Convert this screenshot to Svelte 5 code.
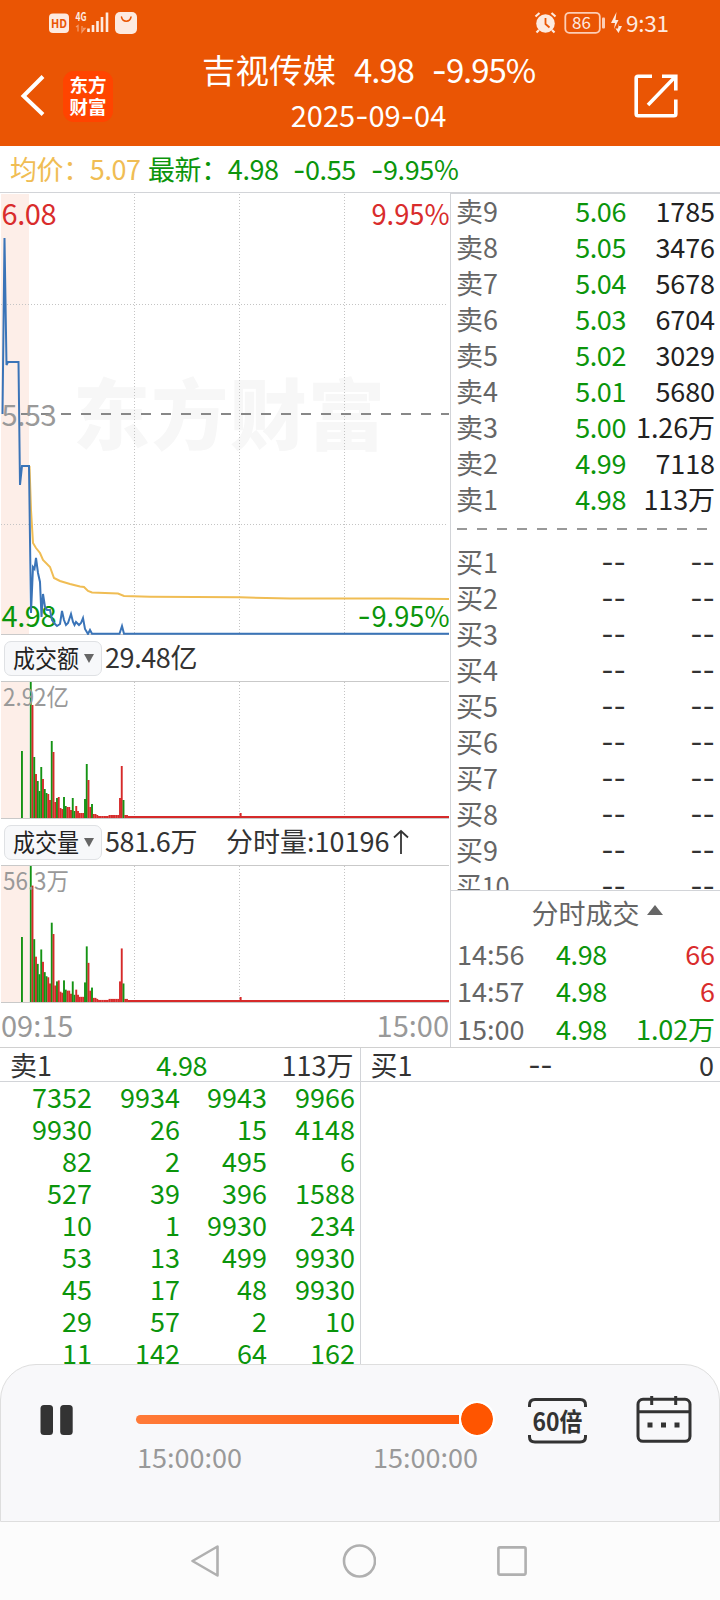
<script lang="ts">
    type Bar = { x: number; h: number; up: boolean };

    const sells = [
        ['卖9', '5.06', '1785'],
        ['卖8', '5.05', '3476'],
        ['卖7', '5.04', '5678'],
        ['卖6', '5.03', '6704'],
        ['卖5', '5.02', '3029'],
        ['卖4', '5.01', '5680'],
        ['卖3', '5.00', '1.26万'],
        ['卖2', '4.99', '7118'],
        ['卖1', '4.98', '113万'],
    ];
    const buys = [1, 2, 3, 4, 5, 6, 7, 8, 9, 10];

    const trades = [
        { time: '14:56', price: '4.98', vol: '66', up: true },
        { time: '14:57', price: '4.98', vol: '6', up: true },
        { time: '15:00', price: '4.98', vol: '1.02万', up: false },
    ];

    const queue = [
        [7352, 9934, 9943, 9966],
        [9930, 26, 15, 4148],
        [82, 2, 495, 6],
        [527, 39, 396, 1588],
        [10, 1, 9930, 234],
        [53, 13, 499, 9930],
        [45, 17, 48, 9930],
        [29, 57, 2, 10],
        [11, 142, 64, 162],
    ];

    const gridX = [134.5, 239.5, 344.5];

    const priceLine =
        '2.5,414 4.5,238 6.5,365 8,362 18.5,362 20,485 22,466 29,466 31,613 33,567 34.5,569 36,558 38,573 40,582 41.5,617 43,594 45,607 47,610 50,610 52,620 55,624 57,626 60,624 62,611 64,620 66,625 68,623 71,614 73,622 74.5,625 76,622 79,625 81,623 83,618 85,629 88,634 90,630 92,633.7 119.5,633.7 122,626 124,633.7 449,633.7';
    const avgLine =
        '29.5,466 31,510 33,543 36,548 40,553 43,560 50,567 54,578 60,581 70,584 80,586.5 84,587 88,591 92,592.5 118,593.5 124,596 150,596.7 240,597.3 290,598.5 393,598.5 449,599';

    // minute bars after the open, bar height in px; u = up (red), d = down (green)
    const minutes =
        'd136 u113 d61 u44 d37 d27 d51 u39 d29 d25 u24 u18 d77 u66 u16 d20 u21 u10 u9 d21 d12 u11 u11 u8 d20 d7 u12 u7 u5 u5 u5 d19 d54 u38 u11 d14 u4 u4 u3 u2 u2 u2 u2 u2 u2 u3 u3 u3 u3 u3 u3 u20 u52 d18 u3 u3';

    function makeBars(first: number, auction: number, scale: number): Bar[] {
        const bars = minutes.split(' ').map((m, i) => ({
            x: 29.8 + i * 1.75,
            h: i === 0 ? first : Number(m.slice(1)) * scale,
            up: m[0] === 'u',
        }));
        return [{ x: 21, h: auction, up: false }, ...bars];
    }

    const amountBars = makeBars(136, 67, 1);
    const volumeBars = makeBars(136, 65, 1.03);
</script>

{#snippet signed(value: string)}<span class="minus">-</span>{value}{/snippet}

{#snippet histogram(bars: Bar[], label: string)}
    <svg class="histogram" width="450" height="138" viewBox="0 0 450 138">
        <rect x="1" y="1" width="28" height="136" fill="#fdeee8" />
        {#each gridX as x}
            <line class="grid" x1={x} x2={x} y1="1" y2="136" />
        {/each}
        <path d="M1 .5H449M1 137.5H449" stroke="#c9c9c9" />
        {#each bars as bar}
            <rect x={bar.x} y={137 - bar.h} width="1.9" height={bar.h} fill={bar.up ? '#d62a2a' : '#149314'} />
        {/each}
        <rect x="128" y="135" width="321" height="2" fill="#d62a2a" />
        <rect x="239.6" y="132" width="2" height="4" fill="#d62a2a" />
        <text x="3" y="25" font-size="24" fill="#999" textLength="66" lengthAdjust="spacingAndGlyphs">{label}</text>
    </svg>
{/snippet}

<div class="screen">
    <header>
        <div class="status">
            <svg width="90" height="24" viewBox="48 11 90 24">
                <rect x="49" y="13.500" width="20" height="19.500" rx="4" fill="#fdeae0" />
                <text x="51" y="28" font-size="12" font-weight="700" fill="#ea5504" textLength="16" lengthAdjust="spacingAndGlyphs">HD</text>
                <text x="75.500" y="21" font-size="12" font-weight="700" fill="#fdeae0" textLength="11" lengthAdjust="spacingAndGlyphs">4G</text>
                <path d="M76 27l2-1.500v6M82 26v6l3-3.500h-2" fill="none" stroke="#f39a6b" stroke-width="1.300" />
                <path d="M88.500 28.500V32M93 25V32M97.500 21V32M102 17V32M107 12.500V32" stroke="#fdeae0" stroke-width="2.600" />
                <rect x="115" y="12" width="22" height="22" rx="5" fill="#fdeae0" />
                <path d="M121.500 17c1 5.500 8.500 5.500 9.500 0" fill="none" stroke="#ea5504" stroke-width="1.500" stroke-linecap="round" />
            </svg>
            <svg width="136" height="24" viewBox="534 11 136 24">
                <circle cx="545.500" cy="23.500" r="9.300" fill="#fdeae0" />
                <path d="M535.500 16.500l4-3.500M551.500 13l4 3.500M539 30l-2.500 2.500M552 30l2.500 2.500" stroke="#fdeae0" stroke-width="2.200" />
                <path d="M545.500 18v6l4 3.500" fill="none" stroke="#ea5504" stroke-width="1.800" />
                <rect x="565.300" y="12.800" width="34.500" height="20" rx="4" fill="none" stroke="#fdcdb5" stroke-width="1.800" />
                <rect x="602" y="17.500" width="3" height="11" rx="1" fill="#fdcdb5" />
                <text x="572" y="28.800" font-size="17" fill="#fdeae0">86</text>
                <path d="M616.500 12l-5.500 11h4l-1 6 4.500-9h-3zM619 23.500l-1 5h-2.500l3 4.500 3.500-7h-3z" fill="#fdeae0" />
                <text x="626" y="31.500" font-size="22.500" fill="#fdeae0" textLength="43">9:31</text>
            </svg>
        </div>
        <div class="titlebar">
            <svg class="back" width="26" height="42" viewBox="0 0 26 42">
                <path d="M23 1.500L3.500 21L23 39.500" fill="none" stroke="#fff" stroke-width="4" />
            </svg>
            <div class="logo"><span>东方</span><span>财富</span></div>
            <div class="title">
                <h1><span>吉视传媒</span><span class="figure">4.98</span><span class="figure">{@render signed('9.95%')}</span></h1>
                <p>2025{@render signed('09')}{@render signed('04')}</p>
            </div>
            <svg class="share" width="44" height="44" viewBox="0 0 44 44" fill="none" stroke="#fff" stroke-width="3.600">
                <path d="M18 2.200H4Q2.200 2.200 2.200 4V40Q2.200 41.800 4 41.800H40Q41.800 41.800 41.800 40V25.500" />
                <path d="M28 2.200H41.800V16.500M41 3L14 31" />
            </svg>
        </div>
    </header>

    <div class="quote">
        <span class="avg">均价：5.07</span>
        <span class="latest">最新：4.98</span>
        <span class="change">{@render signed('0.55')}</span>
        <span>{@render signed('9.95%')}</span>
    </div>

    <main>
        <section class="charts">
            <svg width="450" height="443" viewBox="0 192 450 443">
                <path d="M0 192.500H450" stroke="#d2d4d8" />
                <rect x="1" y="194" width="28" height="440" fill="#fdeee8" />
                <text x="73" y="444" font-size="77" font-weight="900" fill="#f7f7f7" textLength="312">东方财富</text>
                {#each gridX as x}
                    <line class="grid" x1={x} x2={x} y1="194" y2="633" />
                {/each}
                <path class="grid" d="M1 304.500H448M1 524.500H448" />
                <path d="M1 634.500H449" stroke="#c9c9c9" />
                <path d="M61 414H449" stroke="#888" stroke-width="2" stroke-dasharray="10 10" />
                <path d="M21 414H31M41 414H51" stroke="#888" stroke-width="2" />
                <text x="1.500" y="425.500" font-size="29" fill="#999" textLength="55">5.53</text>
                <polyline points={avgLine} fill="none" stroke="#f0bd54" stroke-width="2" />
                <text x="1.500" y="626.500" font-size="29" fill="#0b950b" textLength="55">4.98</text>
                <polyline points={priceLine} fill="none" stroke="#3a74b8" stroke-width="2" />
                <text x="1.500" y="225" font-size="29" fill="#d92c2c" textLength="55">6.08</text>
                <text x="449.500" y="225" font-size="29" fill="#d92c2c" text-anchor="end" textLength="78" lengthAdjust="spacingAndGlyphs">9.95%</text>
                <text x="449.500" y="627" font-size="29" fill="#0b950b" text-anchor="end" textLength="78" lengthAdjust="spacingAndGlyphs">9.95%</text>
                <text class="minus" x="357.500" y="627" font-size="29" fill="#0b950b">-</text>
            </svg>

            <div class="toolbar">
                <button><span>成交额</span><i></i></button>
                <span class="total">29.48亿</span>
            </div>
            {@render histogram(amountBars, '2.92亿')}

            <div class="toolbar">
                <button><span>成交量</span><i></i></button>
                <span class="total">581.6万</span>
                <span>分时量:10196</span>
                <svg width="16" height="26" viewBox="0 0 16 26" fill="none" stroke="#333" stroke-width="1.800">
                    <path d="M8 25V2M1 8.500L8 2L15 8.500" />
                </svg>
            </div>
            {@render histogram(volumeBars, '56.3万')}

            <div class="axis"><span>09:15</span><span>15:00</span></div>
        </section>

        <section class="book">
            <div class="levels">
                {#each sells as [label, price, vol]}
                    <div class="level">
                        <span class="label">{label}</span>
                        <span class="price">{price}</span>
                        <span class="vol">{vol}</span>
                    </div>
                {/each}
                <svg class="divider" width="251" height="2"><path d="M0 1H251" stroke="#999" stroke-width="2" stroke-dasharray="10 10" /></svg>
                {#each buys as n}
                    <div class="level">
                        <span class="label" class:squeeze={n > 9}>买{n}</span>
                        <span class="empty">--</span>
                        <span class="empty">--</span>
                    </div>
                {/each}
            </div>
            <div class="ticks-head"><span>分时成交</span><i></i></div>
            <div class="ticks">
                {#each trades as t}
                    <div class="tick">
                        <span class="label">{t.time}</span>
                        <span class="price">{t.price}</span>
                        <span class="vol" class:up={t.up} class:down={!t.up}>{t.vol}</span>
                    </div>
                {/each}
            </div>
        </section>
    </main>

    <section class="depth">
        <div class="side">
            <div class="side-head">
                <span>卖1</span><span class="down">4.98</span><span>113万</span>
            </div>
            <div class="queue">
                {#each queue.flat() as n}
                    <span>{n}</span>
                {/each}
            </div>
        </div>
        <div class="side">
            <div class="side-head">
                <span>买1</span><span class="empty">--</span><span>0</span>
            </div>
        </div>
    </section>

    <footer class="player">
        <svg class="pause" width="34" height="30" viewBox="0 0 34 30" fill="#333">
            <rect x=".500" width="12.500" height="30" rx="3.500" />
            <rect x="20.200" width="12.500" height="30" rx="3.500" />
        </svg>
        <div class="slider">
            <div class="track"><div class="bar"></div><div class="knob"></div></div>
            <div class="times"><span>15:00:00</span><span>15:00:00</span></div>
        </div>
        <svg class="speed" width="60" height="46" viewBox="0 0 60 46">
            <path d="M1.500 9V7Q1.500 1.500 7 1.500H52Q57.500 1.500 57.500 7V9M1.500 37V39Q1.500 44 7 44H52Q57.500 44 57.500 39V37" fill="none" stroke="#333" stroke-width="3" />
            <text x="4.500" y="33" font-size="25" font-weight="700" fill="#333" textLength="50" lengthAdjust="spacingAndGlyphs">60倍</text>
        </svg>
        <svg class="calendar" width="56" height="48" viewBox="0 0 56 48" fill="none" stroke="#333" stroke-width="3">
            <rect x="2" y="3.300" width="52" height="42" rx="5" />
            <path d="M2 15.700H54M15.700 0V9M39.700 0V9" />
            <path d="M11.500 29h5M25 29h5M38.500 29h5" stroke-width="5" />
        </svg>
    </footer>

    <nav>
        <svg width="30" height="34" viewBox="0 0 30 34">
            <path d="M26.500 2.500V31.500L1.500 17Z" />
        </svg>
        <svg width="34" height="34" viewBox="0 0 34 34">
            <circle cx="17.500" cy="17" r="15.500" />
        </svg>
        <svg width="32" height="34" viewBox="0 0 32 34">
            <rect x="1.400" y="3.400" width="27.200" height="27.200" rx="1.500" />
        </svg>
    </nav>
</div>

<style>
    :global(body) {
        margin: 0;
        background: #fff;
    }

    .screen {
        display: flex;
        flex-direction: column;
        width: 720px;
        height: 1600px;
        overflow: hidden;
        background: #fff;
        color: #333;
        font-family: "Noto Sans CJK SC", "Noto Sans", sans-serif;
        font-size: 27px;
        line-height: 32px;
    }

    svg {
        display: block;
        flex: none;
    }

    .minus,
    .empty {
        font-family: Inter, sans-serif;
    }

    span.minus {
        line-height: 0;
    }

    .down {
        color: #0b950b;
    }

    .up {
        color: #d92c2c;
    }

    header {
        height: 146px;
        background: #ea5504;
        color: #fff;
    }

    .status {
        display: flex;
        justify-content: space-between;
        padding: 11px 50px 11px 48px;
    }

    .titlebar {
        display: flex;
        align-items: center;
        height: 100px;
        padding: 0 42px 0 20px;
        box-sizing: border-box;
    }

    .logo {
        display: flex;
        flex-direction: column;
        align-items: center;
        justify-content: center;
        width: 50px;
        height: 51px;
        margin-left: 17px;
        padding-bottom: 2px;
        box-sizing: border-box;
        border-radius: 11px;
        background: #ff4400;
        font-size: 18.5px;
        font-weight: 700;
        line-height: 22px;
    }

    .title {
        flex: 1;
        text-align: center;
        padding: 0 10px 10px 0;
    }

    h1 {
        display: flex;
        justify-content: center;
        gap: 18px;
        margin: 0;
        font-size: 33.5px;
        font-weight: 400;
        line-height: 46px;
    }

    .figure {
        font-size: 33px;
        letter-spacing: -1.1px;
    }

    .title p {
        margin: 0;
        font-size: 29px;
        line-height: 44px;
    }

    .quote {
        display: flex;
        height: 46px;
        padding-left: 10px;
        line-height: 45px;
        letter-spacing: -0.4px;
        color: #0b950b;
    }

    .avg {
        width: 138px;
        color: #f0bd54;
    }

    .latest {
        width: 145px;
    }

    .change {
        width: 78px;
    }

    main {
        display: flex;
        height: 856px;
        border-bottom: 1px solid #d0d0d0;
        box-sizing: border-box;
    }

    .charts {
        width: 450px;
    }

    .grid {
        stroke: #c4c4c4;
        stroke-width: 1;
        stroke-dasharray: 1 2;
    }

    .toolbar {
        display: flex;
        align-items: center;
        height: 46px;
        white-space: nowrap;
    }

    .toolbar > span {
        height: 35px;
    }

    button {
        display: flex;
        align-items: center;
        width: 98px;
        height: 35px;
        margin: 0 3px 0 4px;
        padding: 0 0 3px 8px;
        border: 1px solid #dfe1e4;
        border-radius: 7px;
        background: #f7f8fa;
        color: #222;
        font: inherit;
        font-size: 25px;
        white-space: nowrap;
    }

    button span {
        flex: none;
        width: 71px;
        line-height: 30px;
        transform: scaleX(0.88);
        transform-origin: left;
    }

    button i {
        margin-top: 3px;
        border: 5.5px solid transparent;
        border-top: 9px solid #666;
        border-bottom: 0;
    }

    .total {
        width: 121px;
        letter-spacing: -0.4px;
    }

    .toolbar svg {
        margin-left: 4px;
    }

    .axis {
        display: flex;
        justify-content: space-between;
        padding: 0 1px;
        line-height: 43px;
        font-size: 29px;
        color: #999;
    }

    .book {
        flex: 1;
        border-left: 1px solid #d2d4d8;
        border-top: 2px solid #d2d4d8;
    }

    .levels {
        height: 696px;
        overflow: hidden;
    }

    .level {
        display: grid;
        grid-template-columns: 91px 79px 89px;
        height: 36px;
        padding-left: 5px;
        text-align: right;
        line-height: 33px;
    }

    .level .empty {
        line-height: 36px;
    }

    .label {
        color: #666;
        text-align: left;
    }

    .squeeze {
        transform: scaleX(0.94);
        transform-origin: left;
    }

    .price {
        letter-spacing: -0.4px;
        color: #0b950b;
    }

    .vol {
        letter-spacing: -0.1px;
        color: #222;
    }

    .divider {
        margin: 10px 0 15px 6px;
    }

    .ticks-head {
        display: flex;
        justify-content: center;
        gap: 7px;
        height: 46px;
        padding-left: 23px;
        border-top: 1px solid #d2d4d8;
        line-height: 44px;
        color: #666;
        box-sizing: border-box;
    }

    .ticks-head i {
        height: 0;
        margin-top: 14px;
        border: 8px solid transparent;
        border-top: 0;
        border-bottom: 10px solid #666;
    }

    .tick {
        display: grid;
        grid-template-columns: 99px 70px 89px;
        height: 37.33px;
        padding-left: 6px;
        line-height: 35px;
    }

    .tick .vol {
        text-align: right;
    }

    .tick .up {
        color: #d92c2c;
    }

    .tick .down {
        color: #0b950b;
    }

    .depth {
        display: flex;
        height: 316px;
    }

    .side {
        flex: 1;
    }

    .side:first-child {
        box-sizing: border-box;
        border-right: 1px solid #d2d4d8;
    }

    .side-head {
        display: grid;
        grid-template-columns: 1fr 1fr 1fr;
        height: 33px;
        padding: 0 6px 0 10px;
        border-bottom: 1px solid #d2d4d8;
        line-height: 33px;
    }

    .side-head span:nth-child(2) {
        text-align: center;
        letter-spacing: -0.4px;
    }

    .side-head .empty {
        line-height: 36px;
        padding-right: 4px;
    }

    .side-head span:last-child {
        text-align: right;
    }

    .queue {
        display: grid;
        grid-template-columns: 88px 88px 87px 88px;
        padding-left: 4px;
        text-align: right;
        line-height: 30px;
        grid-auto-rows: 32px;
        color: #0b950b;
    }

    .player {
        position: relative;
        display: flex;
        align-items: flex-start;
        height: 158px;
        padding: 30px 27px 0 39px;
        box-sizing: border-box;
        border: 1px solid #dedede;
        border-radius: 36px 36px 0 0;
        background: #f8f8fa;
    }

    .pause {
        margin-top: 10px;
    }

    .slider {
        width: 359px;
        margin: 7px 0 0 62px;
    }

    .track {
        display: flex;
        align-items: center;
        height: 34px;
    }

    .bar {
        width: 324px;
        height: 9px;
        border-radius: 5px 0 0 5px;
        background: linear-gradient(90deg, #ff7a38, #ff5a0c);
    }

    .knob {
        width: 32px;
        height: 32px;
        border: 2px solid #fff;
        border-radius: 50%;
        background: #ff5500;
        background-clip: padding-box;
    }

    .times {
        display: flex;
        justify-content: space-between;
        padding: 3px 17px 0 1px;
        color: #999;
        line-height: 36px;
    }

    .speed {
        margin: 3px 0 0 33px;
    }

    .calendar {
        margin: 1px 0 0 auto;
    }

    nav {
        flex: 1;
        display: flex;
        justify-content: center;
        align-items: center;
        gap: 121px;
        background: #fcfcfc;
    }

    nav svg {
        fill: none;
        stroke: #b0b0b0;
        stroke-width: 2.6;
        stroke-linejoin: round;
    }
</style>
